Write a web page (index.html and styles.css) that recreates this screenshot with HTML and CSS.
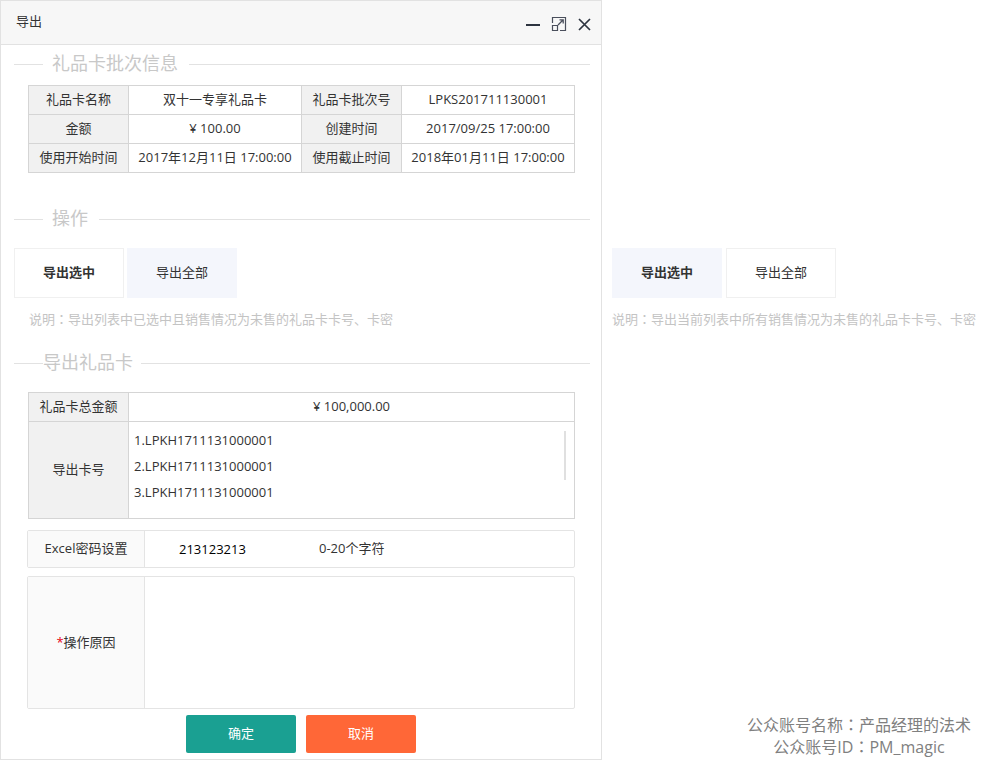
FILE: index.html
```html
<!DOCTYPE html>
<html lang="zh-CN">
<head>
<meta charset="utf-8">
<title>导出</title>
<link rel="stylesheet" href="styles.css">
</head>
<body>
<main class="page">
  <section class="dialog">
    <header class="dialog-header">
      <h1 class="dialog-title">导出</h1>
      <div class="window-tools">
        <button type="button" class="tool" aria-label="最小化">
          <svg viewBox="0 0 16 16" width="16" height="16"><path d="M1 9h14" fill="none" stroke="#2d3440" stroke-width="2"/></svg>
        </button>
        <button type="button" class="tool" aria-label="最大化">
          <svg viewBox="0 0 16 16" width="16" height="16" fill="none" stroke="#4a4f5c"><path d="M1.500 7V1.500H14.500V14.500H9M1.500 9.500H6.500V14.500H1.500Z" stroke-width="1.200"/><path d="M7 9L12 4M8.500 3.800H12.200V7.500" stroke-width="1.300"/></svg>
        </button>
        <button type="button" class="tool" aria-label="关闭">
          <svg viewBox="0 0 16 16" width="16" height="16"><path d="M2 3L13 14M13 3L2 14" fill="none" stroke="#2d3440" stroke-width="1.700"/></svg>
        </button>
      </div>
    </header>

    <div class="dialog-body">
      <h2 class="section-title"><span class="section-name">礼品卡批次信息</span></h2>
      <table class="info-table batch-table">
        <colgroup><col class="col-label"><col class="col-value"><col class="col-label"><col class="col-value"></colgroup>
        <tbody>
          <tr><th scope="row">礼品卡名称</th><td>双十一专享礼品卡</td><th scope="row">礼品卡批次号</th><td>LPKS201711130001</td></tr>
          <tr><th scope="row">金额</th><td>¥ 100.00</td><th scope="row">创建时间</th><td>2017/09/25 17:00:00</td></tr>
          <tr><th scope="row">使用开始时间</th><td>2017年12月11日 17:00:00</td><th scope="row">使用截止时间</th><td>2018年01月11日 17:00:00</td></tr>
        </tbody>
      </table>

      <h2 class="section-title"><span class="section-name">操作</span></h2>
      <div class="tabs">
        <button type="button" class="tab tab-strong">导出选中</button>
        <button type="button" class="tab tab-filled">导出全部</button>
      </div>
      <p class="note note-indent">说明<span class="colon" lang="zh-TW">：</span>导出列表中已选中且销售情况为未售的礼品卡卡号、卡密</p>

      <h2 class="section-title section-title-tight"><span class="section-name">导出礼品卡</span></h2>
      <table class="info-table export-table">
        <colgroup><col class="col-label"><col></colgroup>
        <tbody>
          <tr><th scope="row">礼品卡总金额</th><td>¥ 100,000.00</td></tr>
          <tr>
            <th scope="row">导出卡号</th>
            <td class="list-cell">
              <ul class="card-list">
                <li>1.LPKH1711131000001</li>
                <li>2.LPKH1711131000001</li>
                <li>3.LPKH1711131000001</li>
              </ul>
              <span class="scroll-thumb"></span>
            </td>
          </tr>
        </tbody>
      </table>

      <form class="form">
        <div class="field">
          <label class="field-label" for="password">Excel密码设置</label>
          <input class="password" id="password" type="text" value="213123213">
          <span class="hint">0-20个字符</span>
        </div>
        <div class="field field-tall">
          <label class="field-label" for="reason"><span class="required">*</span>操作原因</label>
          <textarea class="reason" id="reason"></textarea>
        </div>
        <div class="actions">
          <button type="button" class="action confirm">确定</button>
          <button type="button" class="action cancel">取消</button>
        </div>
      </form>
    </div>
  </section>

  <aside class="side">
    <div class="side-state">
      <div class="tabs">
        <button type="button" class="tab tab-strong tab-filled">导出选中</button>
        <button type="button" class="tab">导出全部</button>
      </div>
      <p class="note">说明<span class="colon" lang="zh-TW">：</span>导出当前列表中所有销售情况为未售的礼品卡卡号、卡密</p>
    </div>
    <p class="credit">公众账号名称<span class="colon" lang="zh-TW">：</span>产品经理的法术<br>公众账号ID<span class="colon" lang="zh-TW">：</span>PM_magic</p>
  </aside>
</main>
</body>
</html>
```
FILE: styles.css
```css
* {
  box-sizing: border-box;
}

body,
h1,
h2,
p,
ul {
  margin: 0;
  padding: 0;
}

body,
button,
input,
textarea {
  font-family: "Open Sans", "Noto Sans CJK SC", sans-serif;
  font-size: 13px;
  line-height: 20px;
  color: #333;
}

body {
  background: #fff;
}

.colon {
  font-family: "Noto Sans CJK TC", sans-serif;
}

.page {
  display: grid;
  grid-template-columns: 602fr 384fr;
  min-height: 100vh;
}

.dialog {
  border: 1px solid #e2e2e2;
}

.dialog-header {
  display: flex;
  justify-content: space-between;
  height: 44px;
  padding: 10px 8px 0 15px;
  background: #f7f7f7;
  border-bottom: 1px solid #e2e2e2;
}

.dialog-title {
  font-size: 13px;
  font-weight: 400;
}

.window-tools {
  display: flex;
  gap: 10px;
  padding-top: 5px;
}

.tool {
  width: 16px;
  height: 16px;
  padding: 0;
  border: 0;
  background: none;
}

.tool svg {
  display: block;
}

.dialog-body {
  padding: 6px 11px 6px 13px;
}

.section-title {
  display: flex;
  align-items: center;
  height: 26px;
  font-size: 18px;
  line-height: 26px;
  font-weight: 400;
  color: #c8c8c8;
}

.section-title::before,
.section-title::after {
  content: "";
  height: 1px;
  background: #e2e2e2;
}

.section-title::before {
  width: 29px;
}

.section-title::after {
  flex: 1;
}

.section-name {
  padding: 0 11px 2px 9px;
}

.section-title-tight .section-name {
  padding: 0 8px 2px 0;
}

.info-table {
  width: calc(100% - 29px);
  margin-left: 14px;
  border-collapse: collapse;
  table-layout: fixed;
}

.info-table th,
.info-table td {
  height: 29px;
  padding: 0 0 2px;
  border: 1px solid #d5d5d5;
  font-weight: 400;
  text-align: center;
}

.info-table th {
  background: #f1f1f1;
}

.col-label {
  width: 100px;
}

.batch-table {
  margin-top: 8px;
  margin-bottom: 33px;
}

.tabs {
  display: flex;
  gap: 4px;
}

.tab {
  width: 110px;
  height: 50px;
  padding: 0 0 2px;
  border: 1px solid #f0f0f0;
  background: #fff;
}

.tab-strong {
  font-weight: 700;
}

.tab-filled {
  background: #f4f6fc;
  border-color: #f4f6fc;
}

.dialog .tabs {
  gap: 3px;
  margin-top: 16px;
}

.note {
  margin-top: 11px;
  color: #c4c4c4;
}

.note-indent {
  padding-left: 15px;
  margin-bottom: 21px;
}

.export-table {
  margin-top: 16px;
}

.info-table .list-cell {
  position: relative;
  height: 97px;
  padding: 5px;
  text-align: left;
  vertical-align: top;
}

.card-list {
  list-style: none;
  line-height: 26px;
}

.scroll-thumb {
  position: absolute;
  top: 9px;
  right: 8px;
  width: 2px;
  height: 49px;
  background: #e0e0e0;
}

.form {
  margin: 11px 15px 0 13px;
}

.field {
  display: flex;
  align-items: center;
  height: 38px;
  margin-bottom: 8px;
  border: 1px solid #e4e4e4;
  border-radius: 2px;
}

.field-tall {
  height: 133px;
  margin-bottom: 6px;
}

.field-label {
  display: flex;
  align-items: center;
  justify-content: center;
  align-self: stretch;
  width: 117px;
  padding-bottom: 2px;
  background: #fafafa;
  border-right: 1px solid #e4e4e4;
}

.required {
  color: #e60012;
}

.password {
  width: 174px;
  padding: 0 0 0 34px;
  border: 0;
  background: none;
  color: #000;
}

.hint {
  padding-bottom: 2px;
}

.reason {
  flex: 1;
  align-self: stretch;
  padding: 8px;
  border: 0;
  background: none;
  resize: none;
}

.actions {
  display: flex;
  justify-content: center;
  gap: 10px;
}

.action {
  width: 110px;
  height: 38px;
  padding: 0 0 2px;
  border: 0;
  border-radius: 2px;
  color: #fff;
}

.confirm {
  background: #1aa092;
}

.cancel {
  background: #ff6737;
}

.side {
  display: flex;
  flex-direction: column;
  justify-content: space-between;
  padding: 248px 0 2px 10px;
}

.credit {
  align-self: flex-end;
  padding-right: 15px;
  font-size: 16px;
  line-height: 21px;
  text-align: center;
  color: #808080;
}
```
